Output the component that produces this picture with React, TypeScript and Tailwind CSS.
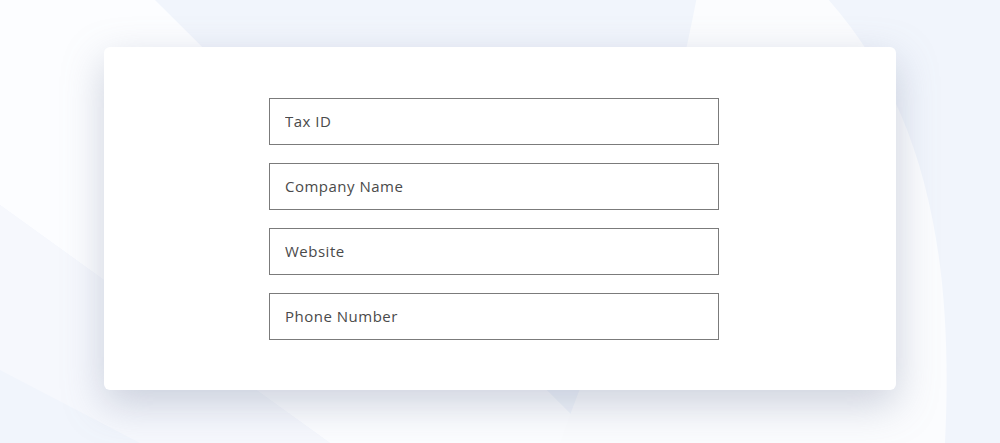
const fields = ['Tax ID', 'Company Name', 'Website', 'Phone Number'];

export default function App() {
  return (
    <div className="relative h-[443px] w-[1000px] overflow-hidden bg-[#f1f5fc] font-['Open_Sans',sans-serif]">
      {/* soft background shapes */}
      <svg className="absolute inset-0" width="1000" height="443" viewBox="0 0 1000 443">
        <polygon points="0,0 155,0 600,443 330,443 0,205" fill="#fcfdff" />
        <polygon points="0,205 330,443 140,443 0,370" fill="#f6f8fd" />
        <path d="M 810 -20 C 920 90 955 240 945 443 L 560 443 C 600 330 660 200 700 -20 Z" fill="#fbfcfe" />
      </svg>

      <div className="relative flex pl-[104px] pt-[47px]">
        <div className="flex h-[343px] w-[792px] flex-col gap-[18px] rounded-md bg-white pl-[165px] pt-[51px] shadow-[0_14px_40px_rgba(130,140,165,0.38)]">
          {fields.map((f) => (
            <input
              key={f}
              placeholder={f}
              className="h-[47px] w-[450px] border border-[#7b7b7b] bg-white px-[15px] pb-[2px] text-[15px] tracking-[0.5px] text-[#444] outline-none placeholder:text-[#4a4a4a] font-['Open_Sans',sans-serif]"
            />
          ))}
        </div>
      </div>
    </div>
  );
}
